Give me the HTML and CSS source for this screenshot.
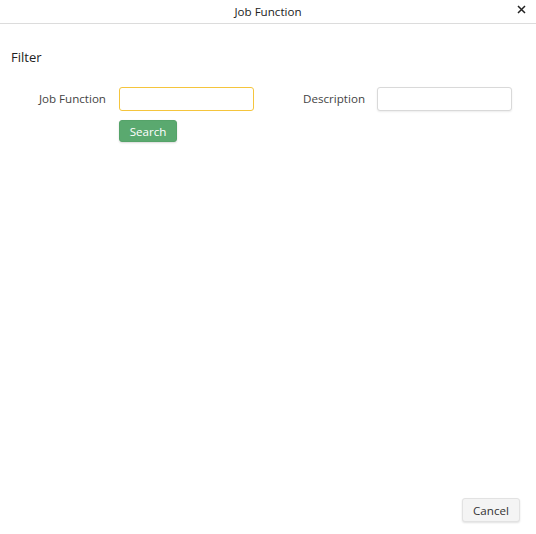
FILE: index.html
```html
<!DOCTYPE html>
<html>
  <head>
    <meta charset="utf-8">
    <meta name="viewport" content="width=device-width, initial-scale=1">
    <title>Job Function</title>
    <link rel="stylesheet" href="styles.css">
  </head>
  <body>
    <div class="dialog">
      <header class="dialog-header">
        <span class="dialog-title">Job Function</span>
        <button class="close" aria-label="Close">
          <svg width="9" height="9" viewBox="0 0 9 9">
            <path d="M1 1 L8 8 M8 1 L1 8" stroke="#222" stroke-width="1.5" fill="none"/>
          </svg>
        </button>
      </header>
      <main class="dialog-body">
        <h2 class="section-title">Filter</h2>
        <form class="filter">
          <label for="jobfn">Job Function</label>
          <div class="field">
            <input id="jobfn" class="focused" type="text">
            <button type="button" class="btn btn-search">Search</button>
          </div>
          <label for="desc">Description</label>
          <div class="field">
            <input id="desc" type="text">
          </div>
        </form>
      </main>
      <footer class="dialog-footer">
        <button type="button" class="btn btn-cancel">Cancel</button>
      </footer>
    </div>
  </body>
</html>
```

FILE: styles.css
```css
body {
  margin: 0;
  font-family: "Open Sans", sans-serif;
  font-size: 11.6px;
  color: #333;
  background: #fff;
}

.dialog {
  display: flex;
  flex-direction: column;
  height: 100vh;
}

.dialog-header {
  position: relative;
  height: 23px;
  border-bottom: 1px solid #dcdcdc;
  display: flex;
  align-items: center;
  justify-content: center;
}

.dialog-title {
  color: #222;
  line-height: 23px;
}

.close {
  position: absolute;
  right: 10px;
  top: 5px;
  padding: 0;
  border: 0;
  background: none;
  display: flex;
}

.dialog-body {
  flex: 1;
  padding: 0 11px;
}

.section-title {
  margin: 24px 0 0;
  font-size: 13px;
  font-weight: 500;
  color: #222;
  line-height: 18px;
}

.filter {
  display: grid;
  grid-template-columns: 95px 135px 97px 135px;
  column-gap: 13px;
  margin-top: 21px;
  align-items: start;
}

.filter label {
  text-align: right;
  line-height: 24px;
  color: #444;
}

.filter label:nth-of-type(2) {
  margin-right: -1px;
}

.field {
  display: flex;
  flex-direction: column;
  align-items: flex-start;
  gap: 9px;
}

input {
  box-sizing: border-box;
  width: 135px;
  height: 24px;
  border: 1px solid #d9d9d9;
  border-radius: 3px;
  box-shadow: 0 1px 2px rgba(0, 0, 0, 0.08);
  font-family: inherit;
  font-size: 12px;
  padding: 0 6px;
}

input.focused {
  border-color: #f5c53d;
  box-shadow: none;
}

.btn {
  box-sizing: border-box;
  font-family: inherit;
  font-size: 11.6px;
  border-radius: 3px;
  padding: 0;
  width: 58px;
}

.btn-search {
  height: 22px;
  background: #5aa96f;
  border: 1px solid #55a369;
  color: #fff;
  box-shadow: 0 1px 2px rgba(0, 0, 0, 0.15);
}

.dialog-footer {
  display: flex;
  justify-content: flex-end;
  padding: 0 16px 12px;
}

.btn-cancel {
  height: 24px;
  background: #f4f4f4;
  border: 1px solid #e2e2e2;
  color: #333;
  box-shadow: 0 1px 2px rgba(0, 0, 0, 0.12);
}
```
